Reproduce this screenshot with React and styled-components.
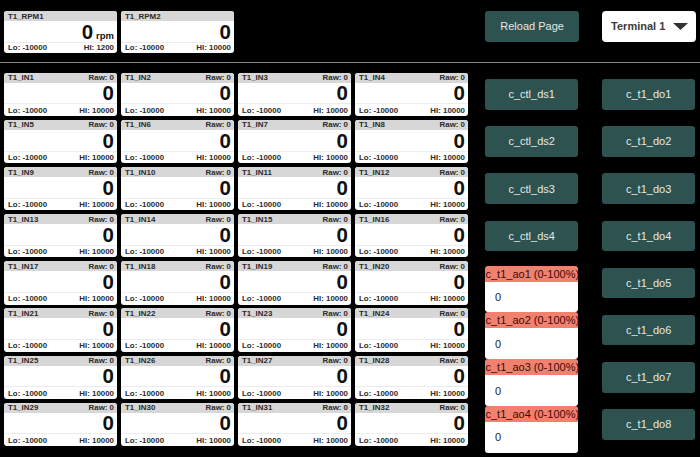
import React from "react";
import styled, { createGlobalStyle } from "styled-components";

const Global = createGlobalStyle`
  html, body {
    margin: 0;
    padding: 0;
    background: #000;
    font-family: "Liberation Sans", Arial, sans-serif;
  }
  #root { background: #000; min-height: 457px; }
`;

const Page = styled.div`
  width: 700px;
  background: #000;
`;

const TopBar = styled.div`
  display: flex;
  align-items: flex-start;
  height: 62px;
  box-sizing: border-box;
  padding: 11px 4.3px 0 4px;
`;

const CardRow = styled.div`
  display: flex;
  gap: 4px;
`;

const Controls = styled.div`
  margin-left: auto;
  display: flex;
  gap: 23.7px;
`;

const Divider = styled.div`
  height: 1px;
  background: #8a8a8a;
`;

const Main = styled.div`
  display: flex;
  align-items: flex-start;
  padding: 9.7px 0 0 4px;
`;

const Grid = styled.div`
  display: grid;
  grid-template-columns: repeat(4, 113px);
  grid-auto-rows: 43.3px;
  column-gap: 4px;
  row-gap: 3.87px;
`;

const Card = styled.div`
  width: 113px;
  height: ${(p) => (p.$short ? "42.3px" : "43.3px")};
  box-sizing: border-box;
  background: #fff;
  border-radius: 3px;
  overflow: hidden;
  display: flex;
  flex-direction: column;
  color: #111;
  font-weight: bold;
`;

const CardHead = styled.div`
  height: 10px;
  flex: none;
  background: #d7d7d7;
  display: flex;
  justify-content: space-between;
  align-items: center;
  padding: 0 3px 0 4px;
  font-size: 7.9px;
  color: #2a2a2a;
`;

const CardValue = styled.div`
  height: 20px;
  flex: none;
  display: flex;
  justify-content: flex-end;
  align-items: baseline;
  padding: 0 3px;
  font-size: 20.5px;
  line-height: 20px;
  margin-top: 0.7px;
`;

const Unit = styled.span`
  font-size: 9.5px;
  margin-left: 3px;
`;

const CardFoot = styled.div`
  flex: 1;
  border-top: 1px solid #ececec;
  display: flex;
  justify-content: space-between;
  align-items: center;
  padding: 0 3px 0 4px;
  font-size: 7.9px;
  color: #2a2a2a;
`;

const Right = styled.div`
  margin-left: 17px;
  display: flex;
  gap: 23.7px;
`;

const Column = styled.div`
  display: flex;
  flex-direction: column;
  gap: 3.87px;
  width: 93.3px;
`;

const Cell = styled.div`
  height: 43.3px;
  display: flex;
  align-items: center;
`;

const Button = styled.button`
  width: 93.3px;
  height: 30.5px;
  border: none;
  border-radius: 3px;
  background: #2e524f;
  color: #e4e8e7;
  font-family: "Liberation Sans", Arial, sans-serif;
  font-size: 11px;
  padding: 0;
  cursor: pointer;
`;

const Select = styled.div`
  width: 93.3px;
  height: 30.5px;
  box-sizing: border-box;
  background: #fff;
  border-radius: 4px;
  display: flex;
  align-items: center;
  justify-content: space-between;
  padding: 0 7.5px 0 8.7px;
  font-size: 11px;
  color: #3c3c3c;
  font-weight: 600;
`;

const AoList = styled.div`
  margin-top: 4.3px;
  display: flex;
  flex-direction: column;
`;

const AoBlock = styled.div`
  height: 46.77px;
  display: flex;
  flex-direction: column;
`;

const AoHead = styled.div`
  height: 16px;
  flex: none;
  background: #f2806f;
  border-radius: 3px 3px 0 0;
  color: #3a0b06;
  font-size: 11px;
  line-height: 16px;
  white-space: nowrap;
  padding-left: 0.5px;
`;

const AoBody = styled.div`
  flex: 1;
  background: #fff;
  border-radius: 0 0 3px 3px;
  display: flex;
  align-items: center;
  padding-left: 10px;
  font-size: 11px;
  color: #222;
`;

function Gauge({ name, raw, unit, lo, hi, short }) {
  return (
    <Card $short={short}>
      <CardHead>
        <span>{name}</span>
        {raw !== undefined && <span>Raw: {raw}</span>}
      </CardHead>
      <CardValue>
        0{unit && <Unit>{unit}</Unit>}
      </CardValue>
      <CardFoot>
        <span>Lo: {lo}</span>
        <span>HI: {hi}</span>
      </CardFoot>
    </Card>
  );
}

export default function App() {
  const inputs = Array.from({ length: 32 }, (_, i) => `T1_IN${i + 1}`);
  return (
    <Page>
      <Global />
      <TopBar>
        <CardRow>
          <Gauge name="T1_RPM1" unit="rpm" lo="-10000" hi="1200" short />
          <Gauge name="T1_RPM2" lo="-10000" hi="10000" short />
        </CardRow>
        <Controls>
          <Button>Reload Page</Button>
          <Select>
            <span>Terminal 1</span>
            <svg width="15" height="7" viewBox="0 0 15 7">
              <polygon points="0,0 15,0 7.5,7" fill="#333" />
            </svg>
          </Select>
        </Controls>
      </TopBar>
      <Divider />
      <Main>
        <Grid>
          {inputs.map((n) => (
            <Gauge key={n} name={n} raw="0" lo="-10000" hi="10000" />
          ))}
        </Grid>
        <Right>
          <Column>
            {[1, 2, 3, 4].map((i) => (
              <Cell key={i}>
                <Button>c_ctl_ds{i}</Button>
              </Cell>
            ))}
            <AoList>
              {[1, 2, 3, 4].map((i) => (
                <AoBlock key={i}>
                  <AoHead>c_t1_ao{i} (0-100%)</AoHead>
                  <AoBody>0</AoBody>
                </AoBlock>
              ))}
            </AoList>
          </Column>
          <Column>
            {[1, 2, 3, 4, 5, 6, 7, 8].map((i) => (
              <Cell key={i}>
                <Button>c_t1_do{i}</Button>
              </Cell>
            ))}
          </Column>
        </Right>
      </Main>
    </Page>
  );
}
